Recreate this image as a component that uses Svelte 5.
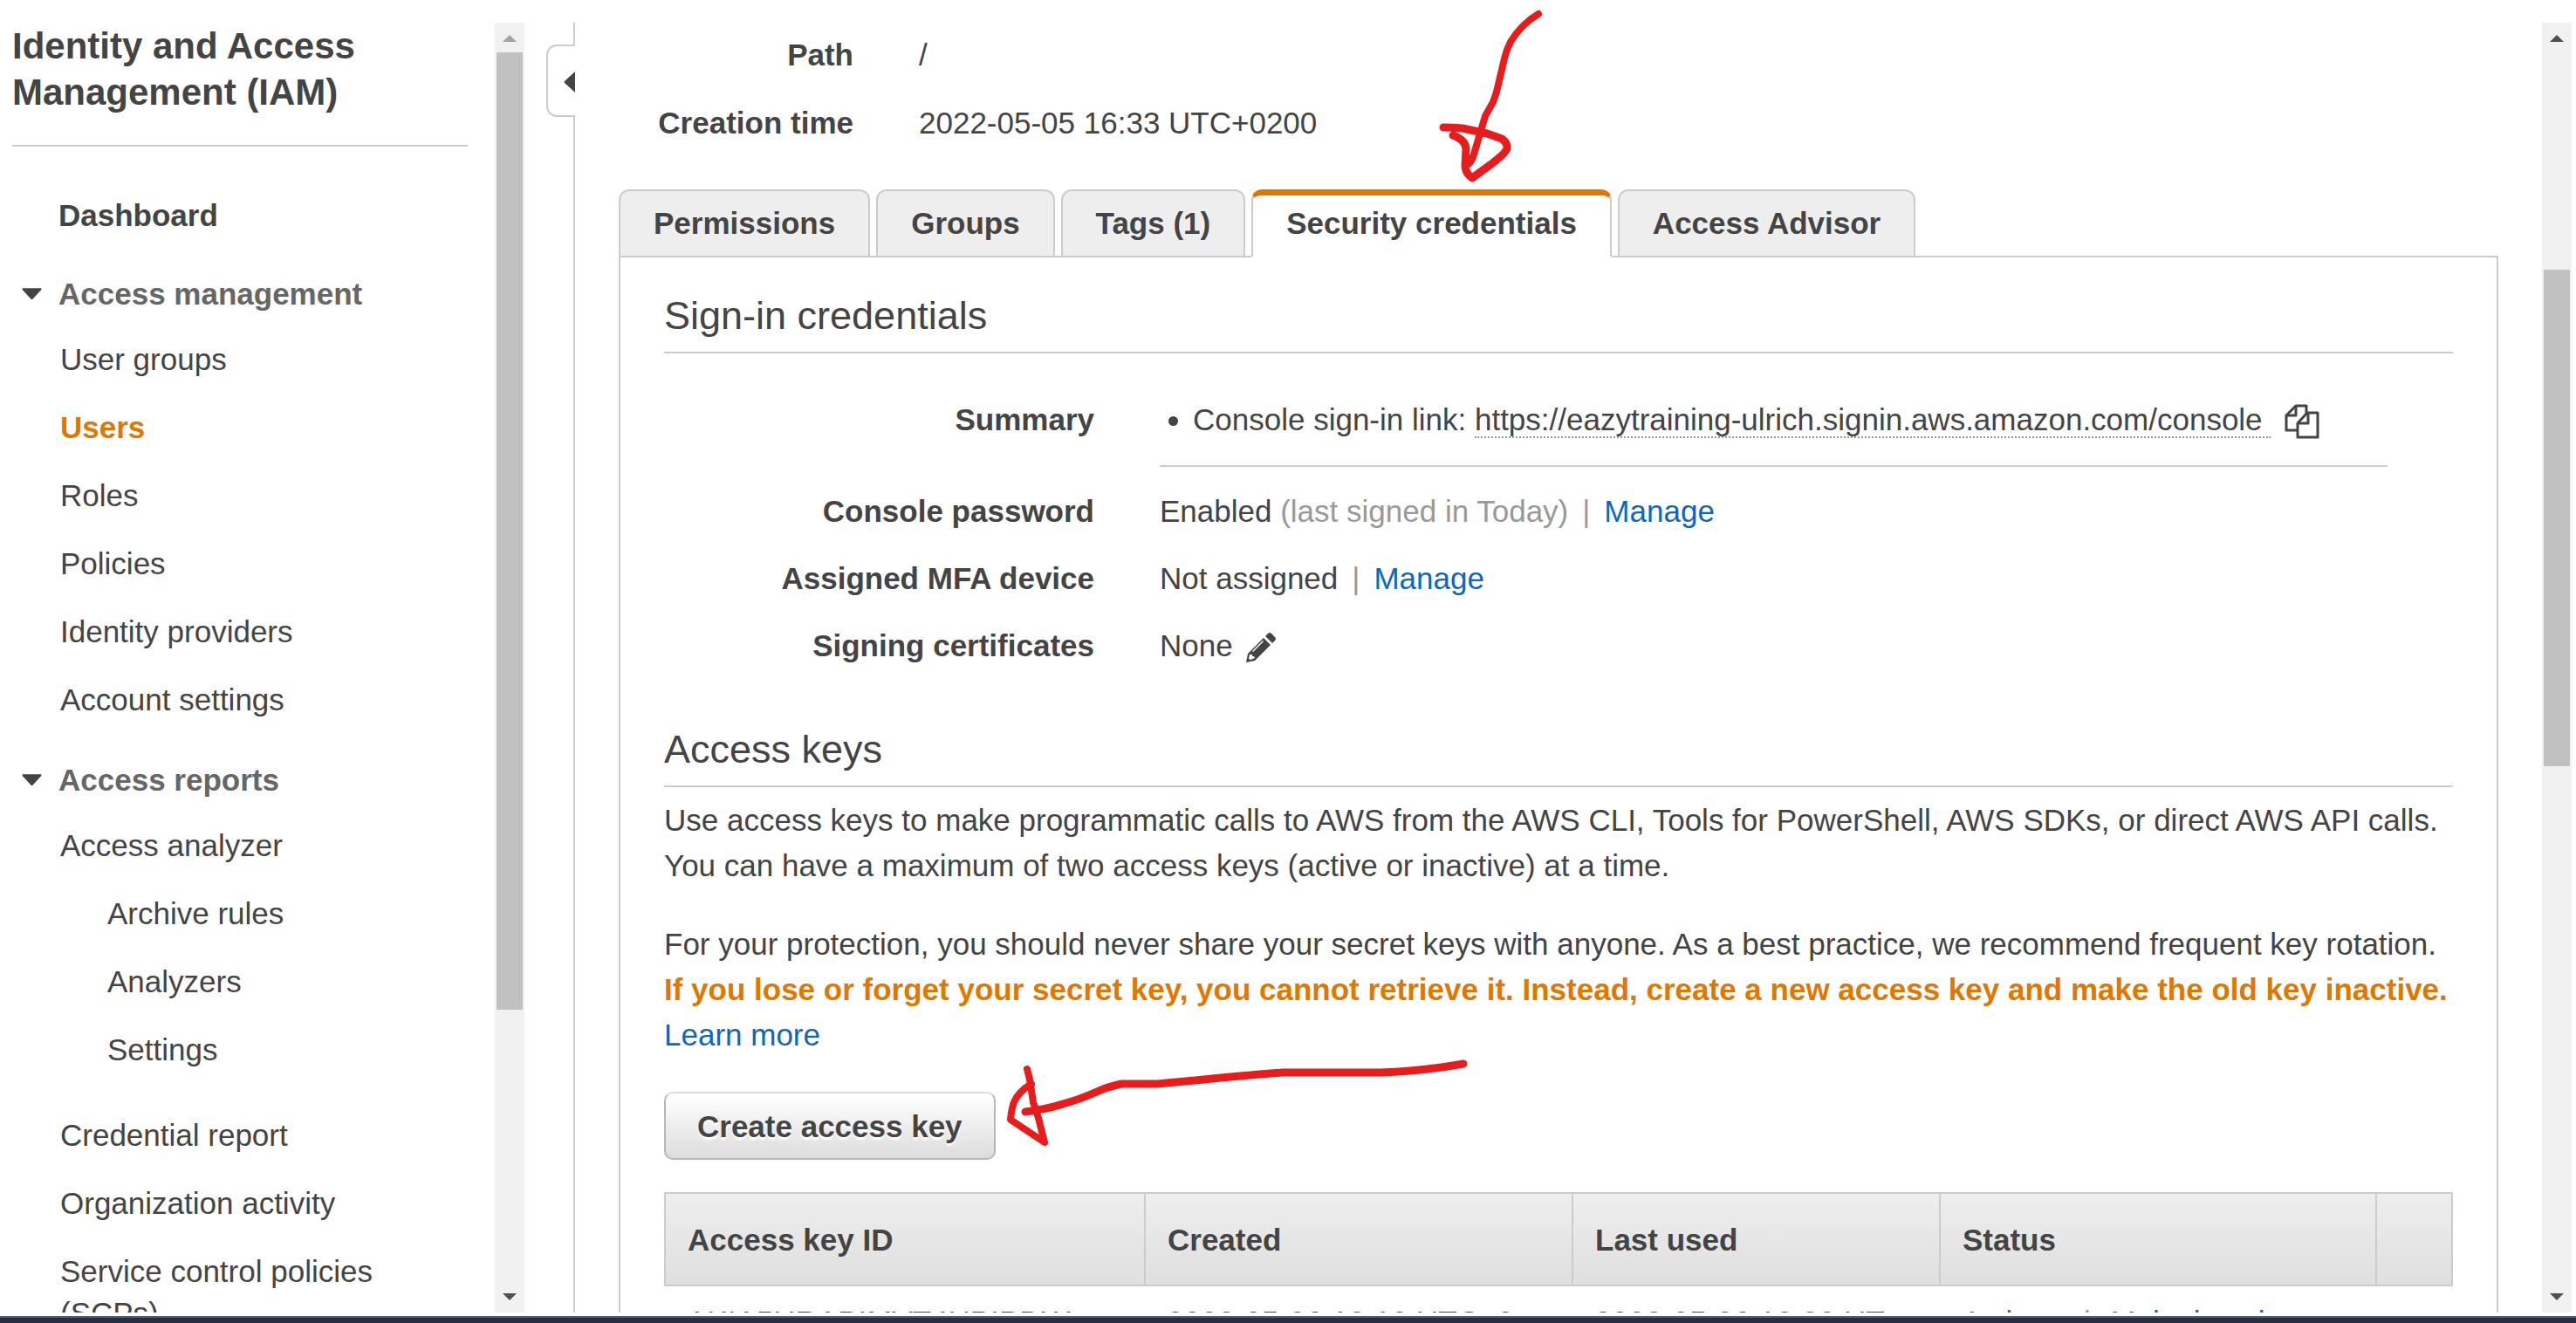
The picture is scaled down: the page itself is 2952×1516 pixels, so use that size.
<script>
  const management = ['User groups', 'Users', 'Roles', 'Policies', 'Identity providers', 'Account settings'];
  const analyzer = ['Archive rules', 'Analyzers', 'Settings'];
  const reports = ['Credential report', 'Organization activity', 'Service control policies (SCPs)'];
  const tabs = ['Permissions', 'Groups', 'Tags (1)', 'Security credentials', 'Access Advisor'];
  const activeTab = 'Security credentials';
  const activePage = 'Users';
</script>

{#snippet scrollbar(kind)}
  <div class="scrollbar {kind}" aria-hidden="true">
    <svg class="arrow up" viewBox="0 0 16 8"><path d="M8 0 16 8H0z" /></svg>
    <div class="track"><div class="thumb"></div></div>
    <svg class="arrow" viewBox="0 0 16 8"><path d="M0 0H16L8 8z" /></svg>
  </div>
{/snippet}

{#snippet caret()}
  <svg viewBox="0 0 24 14"><path d="M1 0H23Q24 0 23 2L13 13Q12 14 11 13L1 2Q0 0 1 0z" /></svg>
{/snippet}

<div class="page">
  <div class="frame">
    <aside class="sidebar">
      <h1>Identity and Access Management (IAM)</h1>
      <nav>
        <a class="dashboard" href="#dashboard">Dashboard</a>
        <button class="group">{@render caret()}Access management</button>
        <ul>
          {#each management as item}
            <li><a class:active={item === activePage} href="#{item}">{item}</a></li>
          {/each}
        </ul>
        <button class="group reports">{@render caret()}Access reports</button>
        <ul>
          <li>
            <a href="#analyzer">Access analyzer</a>
            <ul class="nested">
              {#each analyzer as item}
                <li><a href="#{item}">{item}</a></li>
              {/each}
            </ul>
          </li>
          {#each reports as item}
            <li><a href="#{item}">{item}</a></li>
          {/each}
        </ul>
      </nav>
    </aside>
    {@render scrollbar('side')}

    <div class="gutter">
      <div class="edge before"></div>
      <button class="collapse" aria-label="Collapse navigation">
        <svg viewBox="0 0 13 24"><path d="M13 0V24L1 13Q0 12 1 11z" /></svg>
      </button>
      <div class="edge after"></div>
    </div>

    <main>
      <dl class="facts">
        <dt>Path</dt>
        <dd>/</dd>
        <dt>Creation time</dt>
        <dd>2022-05-05 16:33 UTC+0200</dd>
      </dl>

      <div class="tabs" role="tablist">
        {#each tabs as tab}
          <button role="tab" aria-selected={tab === activeTab} class:current={tab === activeTab}>{tab}</button>
        {/each}
      </div>

      <section class="panel">
        <h2>Sign-in credentials</h2>
        <dl class="credentials">
          <dt>Summary</dt>
          <dd class="summary">
            <ul>
              <li>
                Console sign-in link: <a class="console" href="#console">https://eazytraining-ulrich.signin.aws.amazon.com/console&nbsp;</a>
                <button class="icon" aria-label="Copy">
                  <svg class="copy" viewBox="0 0 40 40" fill="none" stroke="currentColor" stroke-width="3" stroke-linejoin="round">
                    <path d="M14 30H2V13L13 2H25V11" />
                    <path d="M13 2V13H2" />
                    <path d="M15 22 26 10H38V38H15z" />
                    <path d="M27 10V22H15" />
                  </svg>
                </button>
              </li>
            </ul>
          </dd>
          <dt>Console password</dt>
          <dd>Enabled <span class="muted">(last signed in Today)</span><span class="bar">|</span><a href="#password">Manage</a></dd>
          <dt>Assigned MFA device</dt>
          <dd>Not assigned<span class="bar">|</span><a href="#mfa">Manage</a></dd>
          <dt>Signing certificates</dt>
          <dd>
            None
            <button class="icon" aria-label="Edit">
              <svg class="pencil" viewBox="0 0 34 34" fill="currentColor">
                <path d="M22 4 25 1Q27 -1 29 1L33 5Q35 7 33 9L30 12z" />
                <path fill-rule="evenodd" d="M20 6 28 14 10 32 0 34 2 24zM4 25 3 30 5 31 10 29 9 27 7 27 7 25zM19 9 7 21 8 22 20 10z" />
              </svg>
            </button>
          </dd>
        </dl>

        <h2>Access keys</h2>
        <p>
          Use access keys to make programmatic calls to AWS from the AWS CLI, Tools for PowerShell, AWS SDKs, or direct AWS API calls.
          You can have a maximum of two access keys (active or inactive) at a time.
        </p>
        <p>
          For your protection, you should never share your secret keys with anyone. As a best practice, we recommend frequent key rotation.
          <strong>If you lose or forget your secret key, you cannot retrieve it. Instead, create a new access key and make the old key inactive.</strong>
          <a href="#learn">Learn more</a>
        </p>
        <button class="create">Create access key</button>

        <table>
          <colgroup>
            <col class="c1" /><col class="c2" /><col class="c3" /><col class="c4" /><col />
          </colgroup>
          <thead>
            <tr><th>Access key ID</th><th>Created</th><th>Last used</th><th>Status</th><th aria-label="Actions"></th></tr>
          </thead>
          <tbody>
            <tr>
              <td>AKIA5HRAPIMVT4HPIPDW</td>
              <td>2022-05-06 12:12 UTC+0200</td>
              <td>2022-05-06 12:23 UTC+0200</td>
              <td><span class="ok">Active</span><span class="bar wide">|</span><a href="#inactive">Make inactive</a></td>
              <td></td>
            </tr>
          </tbody>
        </table>
      </section>
    </main>
    {@render scrollbar('main')}
  </div>
  <footer></footer>

  <svg class="ink first" viewBox="0 0 120 200" aria-hidden="true">
    <path class="thin" d="M113 6Q103 12 95 20Q87 28 81 38Q76 48 74 57L67 87Q65 97 61 107L52 123L44 150L39 167Q37 174 33 178" />
    <path d="M4 136Q16 136 26 137L54 143L71 149Q78 154 77 160Q76 165 59 178L37 194Q29 188 29 180L30 160Q29 150 15 145" />
  </svg>
  <svg class="ink second" viewBox="0 0 530 104" aria-hidden="true">
    <path d="M522 8Q510 10 497 12Q460 17 427 18H315Q295 19 172 31H130Q115 34 102 40Q82 49 63 54Q45 60 20 63" />
    <path class="thin" d="M22 14Q25 24 26 32L29 52L35 70L42 98L3 72Q4 60 7 52Q12 40 27 31" />
  </svg>
</div>

<style>
  :global(body) {
    background: #fff;
    color: #444;
    font: 35px/53px "Liberation Sans", Arial, sans-serif;
  }
  .page {
    position: relative;
    display: flex;
    flex-direction: column;
    height: 100vh;
    box-sizing: border-box;
    padding-top: 26px;
    overflow: hidden;
  }
  .frame {
    display: flex;
    flex: 1;
    min-height: 0;
    margin-bottom: 4px;
    overflow: hidden;
  }
  footer {
    flex: none;
    height: 6px;
    border-top: 2px solid #545f6b;
    background: #232f3e;
  }
  a {
    color: #1166bb;
    text-decoration: none;
  }
  button {
    font: inherit;
    color: inherit;
    border: 0;
    padding: 0;
    background: none;
  }
  ul, dl, dd, h1, h2 {
    margin: 0;
    padding: 0;
  }

  .sidebar {
    flex: none;
    box-sizing: border-box;
    width: 567px;
    padding: 0 31px 0 14px;
    overflow: hidden;
  }
  h1 {
    font-size: 42px;
    line-height: 53px;
    padding-bottom: 34px;
    border-bottom: 2px solid #ccc;
  }
  nav a {
    display: block;
    color: #444;
  }
  nav .dashboard {
    margin: 52px 0 37px 53px;
    font-weight: bold;
  }
  nav .active {
    color: #e07700;
    font-weight: bold;
  }
  nav ul {
    display: flex;
    flex-direction: column;
    gap: 30px;
    list-style: none;
    padding-left: 55px;
    line-height: 48px;
  }
  .group {
    display: flex;
    align-items: center;
    gap: 19px;
    padding-left: 11px;
    margin-bottom: 25px;
    font-weight: bold;
    color: #666;
  }
  .group svg {
    width: 23px;
    height: 14px;
    fill: #444;
  }
  .reports {
    margin-top: 41px;
  }
  nav .nested {
    padding: 30px 0 20px 54px;
  }

  .scrollbar {
    flex: none;
    display: flex;
    flex-direction: column;
    align-items: center;
    box-sizing: border-box;
    width: 34px;
    padding: 14px 2px;
    background: #f1f1f1;
  }
  .arrow {
    width: 16px;
    height: 8px;
    fill: #505050;
  }
  .side .up {
    fill: #a3a3a3;
  }
  .track {
    flex: 1;
    align-self: stretch;
    margin: 12px 0;
  }
  .thumb {
    background: #c1c1c1;
  }
  .side .thumb {
    height: 77.8%;
  }
  .main .track {
    padding-top: 249px;
    box-sizing: border-box;
  }
  .main .thumb {
    height: 49%;
  }
  .main {
    margin-right: 5px;
  }

  .gutter {
    flex: none;
    display: flex;
    flex-direction: column;
    width: 33px;
    margin-left: 25px;
  }
  .edge {
    align-self: flex-end;
    width: 2px;
    background: #ccc;
  }
  .before {
    height: 25px;
  }
  .after {
    flex: 1;
  }
  .collapse {
    display: flex;
    justify-content: flex-end;
    align-items: center;
    height: 83px;
    box-sizing: border-box;
    border: 2px solid #ccc;
    border-right: 0;
    border-radius: 12px 0 0 12px;
    padding-top: 3px;
  }
  .collapse svg {
    width: 13px;
    height: 24px;
    fill: #444;
  }

  main {
    flex: 1;
    min-width: 0;
    padding: 0 50px;
  }
  .facts, .credentials {
    display: grid;
    column-gap: 75px;
  }
  .facts {
    grid-template-columns: 269px 1fr;
    row-gap: 25px;
    padding: 10px 0 50px;
  }
  dt {
    text-align: right;
    font-weight: bold;
  }
  .tabs {
    display: flex;
    gap: 7px;
  }
  .tabs button {
    box-sizing: border-box;
    height: 78px;
    padding: 10px 38px 12px;
    border: 2px solid #ccc;
    border-radius: 12px 12px 0 0;
    margin-bottom: -2px;
    background: #eee;
    font-weight: bold;
  }
  .tabs .current {
    border-top: 7px solid #e07700;
    border-bottom-color: #fff;
    padding-top: 5px;
    background: #fff;
    position: relative;
  }
  .panel {
    border: 2px solid #ccc;
    padding: 40px 50px 0;
  }
  h2 {
    font-size: 45px;
    line-height: 53px;
    font-weight: normal;
    padding-bottom: 15px;
    border-bottom: 2px solid #ccc;
  }
  .credentials {
    grid-template-columns: 493px 1fr;
    row-gap: 24px;
    padding: 49px 75px 66px 0;
  }
  .summary {
    padding-bottom: 26px;
    border-bottom: 2px solid #ccc;
  }
  .summary ul {
    padding-left: 38px;
  }
  .console {
    color: #444;
    border-bottom: 2px dotted #999;
  }
  .icon {
    vertical-align: middle;
    line-height: 0;
    margin: -10px 0 -8px 6px;
  }
  .copy {
    width: 40px;
    height: 40px;
  }
  .pencil {
    width: 34px;
    height: 34px;
  }
  .muted, .bar {
    color: #999;
  }
  .bar {
    margin: 0 16px;
  }
  .wide {
    margin: 0 22px 0 44px;
  }
  p {
    margin: 12px 0 38px;
    line-height: 52px;
  }
  p strong {
    color: #e07700;
  }
  .create {
    display: block;
    height: 78px;
    box-sizing: border-box;
    margin-top: 39px;
    padding: 0 36px;
    border: 2px solid #b7b7b7;
    border-top-color: #ddd;
    border-radius: 10px;
    background: linear-gradient(#fff, #ddd);
    font-weight: bold;
    text-shadow: 0 3px 2px #fff;
  }
  table {
    width: 100%;
    margin-top: 37px;
    table-layout: fixed;
    border-collapse: separate;
    border-spacing: 0;
  }
  .c1 { width: 550px; }
  .c2 { width: 490px; }
  .c3 { width: 421px; }
  .c4 { width: 500px; }
  th {
    height: 104px;
    padding: 0 25px;
    text-align: left;
    border: solid #ccc;
    border-width: 2px 0 2px 2px;
    background: linear-gradient(#eee, #dfdfdf);
  }
  th:last-child {
    border-right-width: 2px;
  }
  td {
    padding: 14px 26px;
    vertical-align: top;
    white-space: nowrap;
    overflow: hidden;
    text-overflow: ellipsis;
  }
  .ok {
    color: #1a8a3a;
  }

  .ink {
    position: absolute;
    fill: none;
    stroke: #e71d1d;
    stroke-width: 9;
    stroke-linecap: round;
    stroke-linejoin: round;
    overflow: visible;
  }
  .thin {
    stroke-width: 8;
  }
  .first {
    left: 1650px;
    top: 10px;
    width: 120px;
    height: 200px;
  }
  .second {
    left: 1155px;
    top: 1211px;
    width: 530px;
    height: 104px;
  }
</style>
